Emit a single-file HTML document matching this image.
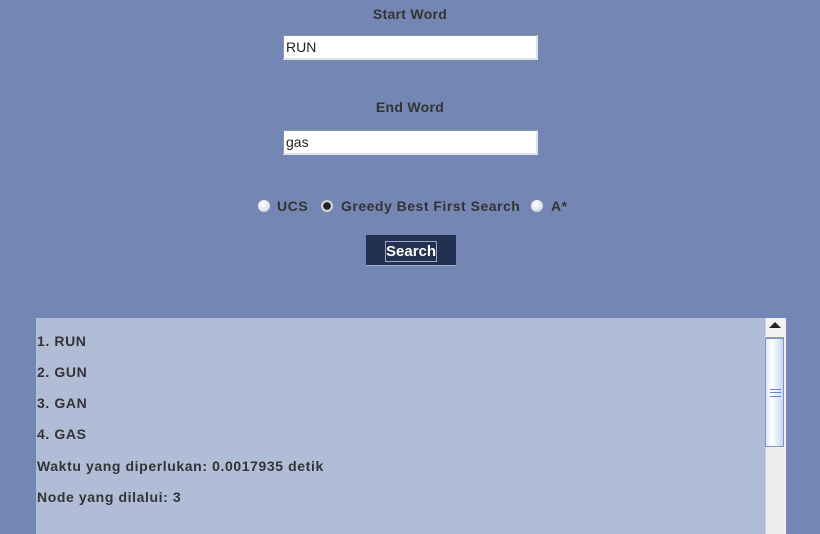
<!DOCTYPE html>
<html><head><style>
body{margin:0;width:820px;height:534px;background:#7486b4;font-family:"Liberation Sans",sans-serif;position:relative;overflow:hidden;color:#333}
.a{position:absolute}
.lbl{font-weight:bold;font-size:14px;width:820px;text-align:center;left:0;letter-spacing:0.3px}
.inp{left:283px;width:250px;height:22px;background:#fff;border-top:1px solid #8893a8;border-left:1px solid #8893a8;border-right:2px solid #dfe3ec;border-bottom:2px solid #dfe3ec;font-size:14px;line-height:22px;padding-left:2px;box-sizing:content-box;color:#222}
.rad{width:12px;height:12px;border-radius:50%;background:radial-gradient(circle at 40% 35%,#fff,#dde3ee 60%,#9aa6c0);border:1px solid #7e8aa6}
.rt{font-weight:bold;font-size:14px;top:198px;letter-spacing:0.5px}
.ln{left:37px;font-weight:bold;font-size:14px;letter-spacing:0.6px}
</style></head><body>
<div class="a lbl" style="top:6px">Start Word</div>
<div class="a inp" style="top:35px">RUN</div>
<div class="a lbl" style="top:99px">End Word</div>
<div class="a inp" style="top:130px">gas</div>
<div class="a rad" style="left:257px;top:199px"></div>
<div class="a rt" style="left:277px">UCS</div>
<div class="a rad" style="left:320px;top:199px;background:radial-gradient(circle,#222 40%,#dde3ee 50%,#9aa6c0)"></div>
<div class="a rt" style="left:341px">Greedy Best First Search</div>
<div class="a rad" style="left:530px;top:199px"></div>
<div class="a rt" style="left:551px">A*</div>
<div class="a" style="left:366px;top:235px;width:90px;height:30px;background:#223052;border-bottom:1px solid #a0aac4"></div>
<div class="a" style="left:385px;top:241px;width:50px;height:19px;border:1px solid #9aa8cc;color:#fff;font-weight:bold;font-size:15px;line-height:19px;text-align:center">Search</div>
<div class="a" style="left:36px;top:318px;width:729px;height:216px;background:#b1bcd6"></div>
<div class="a ln" style="top:333px">1. RUN</div>
<div class="a ln" style="top:364px">2. GUN</div>
<div class="a ln" style="top:395px">3. GAN</div>
<div class="a ln" style="top:426px">4. GAS</div>
<div class="a ln" style="top:458px">Waktu yang diperlukan: 0.0017935 detik</div>
<div class="a ln" style="top:489px">Node yang dilalui: 3</div>
<div class="a" style="left:765px;top:318px;width:20px;height:216px;background:#eeeeee;border-left:1px solid #c8cdd8"></div>
<div class="a" style="left:766px;top:318px;width:18px;height:19px;background:#f2f2f2;border-bottom:1px solid #999"></div>
<div class="a" style="left:769px;top:322px;width:0;height:0;border-left:6px solid transparent;border-right:6px solid transparent;border-bottom:6px solid #222"></div>
<div class="a" style="left:765px;top:338px;width:17px;height:107px;border:1px solid #7a96cc;background:linear-gradient(90deg,#dfe8f4,#fff 35%,#c8d6ea)"></div>
<div class="a" style="left:770px;top:389px;width:11px;height:6px;border-top:1px solid #6a86c0;border-bottom:1px solid #6a86c0"></div>
<div class="a" style="left:770px;top:392px;width:11px;height:1px;background:#6a86c0"></div>
</body></html>
